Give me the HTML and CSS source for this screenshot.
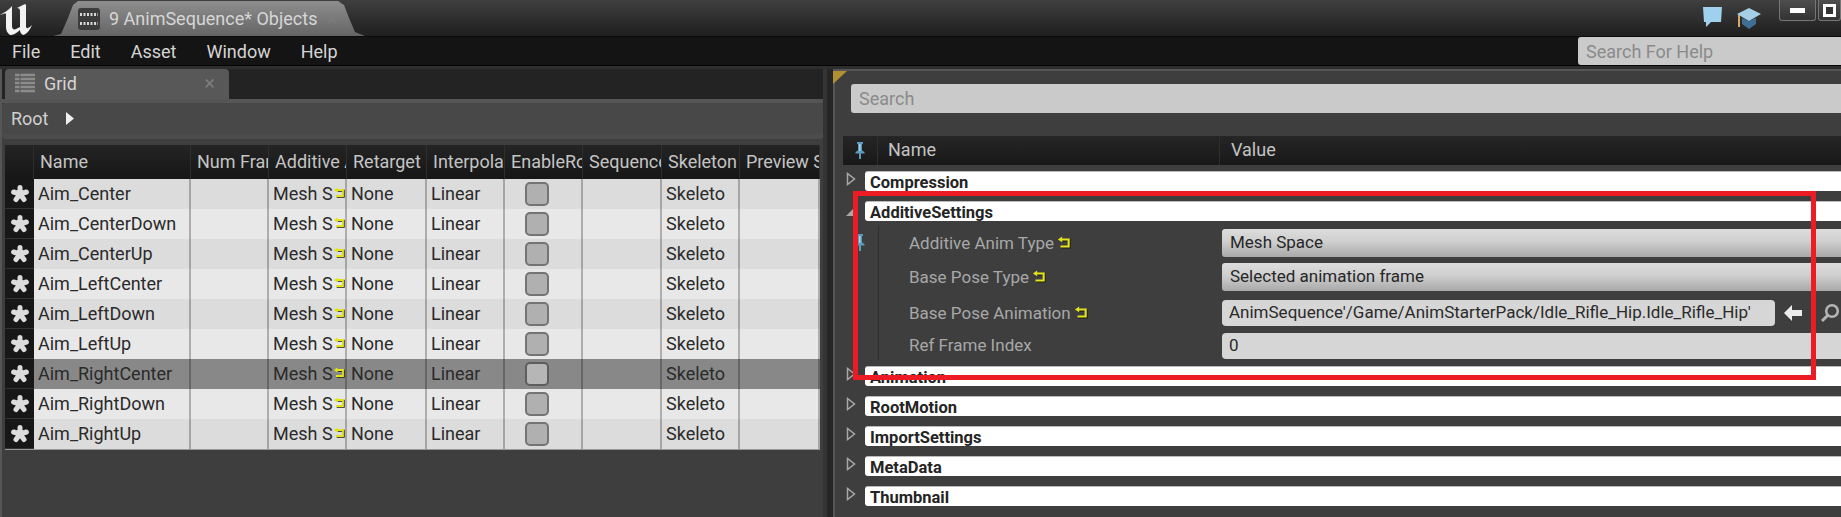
FILE: index.html
```html
<!DOCTYPE html>
<html lang="en">
<head>
    <meta charset="UTF-8">
    <title>9 AnimSequence Objects</title>
    <link rel="stylesheet" href="styles.css">
</head>
<body>
    <svg class="icon-defs" width="0" height="0">
        <symbol id="star" viewBox="0 0 20 20">
            <path d="M10 10V3.500M10 10L3.600 8M10 10l6.400-2M10 10l-4 5.500M10 10l4 5.500" stroke="#dcdcdc" stroke-width="5" stroke-linecap="round"/>
        </symbol>
        <symbol id="reset" viewBox="0 0 12 12">
            <path d="M4 3h6v6H3" fill="none" stroke="#1c1c10" stroke-width="2" transform="translate(.7 .7)"/>
            <path d="M4 3h6v6H3" fill="none" stroke="#e4e41c" stroke-width="1.800"/>
            <path d="M4.400 .4v5L.8 3z" fill="#e4e41c"/>
        </symbol>
        <symbol id="pin" viewBox="0 0 12 18">
            <path d="M3 1h6v1.500l-1 .8v6l2.500 2v1.200H7v5.500H5v-5.500H1.500v-1.200l2.500-2v-6l-1-.8z" fill="#5b9bbd"/>
            <path d="M5 3h1.500v7H5z" fill="#a9d3e8"/>
        </symbol>
        <symbol id="closed" viewBox="0 0 10 14">
            <path d="M1.500 1.500v11L8.500 7z" fill="none" stroke="#a8a8a8" stroke-width="1.500"/>
        </symbol>
    </svg>

    <div class="app">
        <header class="titlebar">
            <svg class="ue-logo" viewBox="0 0 32 34">
                <path d="M0 13C3 11 8 9 12 4V24C12 27 14 28 16 27L20 25V9C20 7 19 6 17 6L25 2 26 3V24C26 27 28 27 32 23 30 28 27 32 23 33 21 32 20 30 20 28 17 31 13 33 10 33 7 31 6 28 6 25V12C6 11 3 12 0 13Z" fill="#f2f2f2"/>
            </svg>
            <div class="doc-tab">
                <svg class="doc-tab-icon" viewBox="0 0 24 24">
                    <rect x="1" y="1" width="22" height="22" rx="3" fill="#3c3c3c"/>
                    <path d="M3 7.500h18M3 16.500h18" stroke="#d8d8d8" stroke-width="3" stroke-dasharray="2 1.500"/>
                </svg>
                <span class="doc-tab-label">9 AnimSequence* Objects</span>
                <span class="close-x">&times;</span>
            </div>
            <div class="title-right">
                <svg class="chat-icon" viewBox="0 0 22 22">
                    <path d="M2 1h19l-1 15H10l-5 5v-5H3z" fill="#9fd0ee"/>
                </svg>
                <svg class="hat-icon" viewBox="0 0 24 24">
                    <path d="M5 12l7 3 7-3v6l-7 5-7-5z" fill="#3f6f94"/>
                    <path d="M0 8l12-6 12 6-12 7z" fill="#a4cfe6"/>
                    <rect x="1" y="9" width="2" height="12" fill="#d9a860"/>
                </svg>
                <div class="win-btn win-min"><span class="min-bar"></span></div>
                <div class="win-btn win-max"><span class="max-box"></span></div>
            </div>
        </header>

        <nav class="menubar">
            <ul class="menu">
                <li>File</li>
                <li>Edit</li>
                <li>Asset</li>
                <li>Window</li>
                <li>Help</li>
            </ul>
            <div class="help-search">Search For Help</div>
        </nav>

        <main class="workspace">
            <section class="grid-panel">
                <div class="panel-tabs">
                    <div class="grid-tab">
                        <svg class="grid-tab-icon" viewBox="0 0 20 20">
                            <path d="M0 2h20M0 6h20M0 10h20M0 14h20M0 18h20" stroke="#8c8c8c" stroke-width="2.500"/>
                            <path d="M5 0v20" stroke="#5a5a5a" stroke-width="1"/>
                        </svg>
                        <span class="grid-tab-label">Grid</span>
                        <span class="close-x">&times;</span>
                    </div>
                </div>
                <div class="breadcrumb">
                    <span>Root</span>
                    <svg class="crumb-arrow" viewBox="0 0 8 13"><path d="M0 0v13l8-6.500z" fill="#f0f0f0"/></svg>
                </div>

                <div class="grid-table">
                    <div class="grid-row grid-head">
                        <div></div>
                        <div>Name</div>
                        <div>Num Frames</div>
                        <div>Additive Anim</div>
                        <div>Retarget</div>
                        <div>Interpolation</div>
                        <div>EnableRoot</div>
                        <div>Sequence</div>
                        <div>Skeleton</div>
                        <div>Preview Skeleton</div>
                    </div>

                    <div class="grid-row row-a">
                        <div class="star-cell"><svg class="star"><use href="#star"/></svg></div>
                        <div class="cell">Aim_Center</div><div class="cell"></div>
                        <div class="cell additive"><span>Mesh Space</span><svg class="reset"><use href="#reset"/></svg></div>
                        <div class="cell">None</div><div class="cell">Linear</div>
                        <div class="cell check-cell"><span class="check"></span></div>
                        <div class="cell"></div><div class="cell"><span class="skel">Skeleton</span></div><div class="cell"></div>
                    </div>
                    <div class="grid-row row-b">
                        <div class="star-cell"><svg class="star"><use href="#star"/></svg></div>
                        <div class="cell">Aim_CenterDown</div><div class="cell"></div>
                        <div class="cell additive"><span>Mesh Space</span><svg class="reset"><use href="#reset"/></svg></div>
                        <div class="cell">None</div><div class="cell">Linear</div>
                        <div class="cell check-cell"><span class="check"></span></div>
                        <div class="cell"></div><div class="cell"><span class="skel">Skeleton</span></div><div class="cell"></div>
                    </div>
                    <div class="grid-row row-a">
                        <div class="star-cell"><svg class="star"><use href="#star"/></svg></div>
                        <div class="cell">Aim_CenterUp</div><div class="cell"></div>
                        <div class="cell additive"><span>Mesh Space</span><svg class="reset"><use href="#reset"/></svg></div>
                        <div class="cell">None</div><div class="cell">Linear</div>
                        <div class="cell check-cell"><span class="check"></span></div>
                        <div class="cell"></div><div class="cell"><span class="skel">Skeleton</span></div><div class="cell"></div>
                    </div>
                    <div class="grid-row row-b">
                        <div class="star-cell"><svg class="star"><use href="#star"/></svg></div>
                        <div class="cell">Aim_LeftCenter</div><div class="cell"></div>
                        <div class="cell additive"><span>Mesh Space</span><svg class="reset"><use href="#reset"/></svg></div>
                        <div class="cell">None</div><div class="cell">Linear</div>
                        <div class="cell check-cell"><span class="check"></span></div>
                        <div class="cell"></div><div class="cell"><span class="skel">Skeleton</span></div><div class="cell"></div>
                    </div>
                    <div class="grid-row row-a">
                        <div class="star-cell"><svg class="star"><use href="#star"/></svg></div>
                        <div class="cell">Aim_LeftDown</div><div class="cell"></div>
                        <div class="cell additive"><span>Mesh Space</span><svg class="reset"><use href="#reset"/></svg></div>
                        <div class="cell">None</div><div class="cell">Linear</div>
                        <div class="cell check-cell"><span class="check"></span></div>
                        <div class="cell"></div><div class="cell"><span class="skel">Skeleton</span></div><div class="cell"></div>
                    </div>
                    <div class="grid-row row-b">
                        <div class="star-cell"><svg class="star"><use href="#star"/></svg></div>
                        <div class="cell">Aim_LeftUp</div><div class="cell"></div>
                        <div class="cell additive"><span>Mesh Space</span><svg class="reset"><use href="#reset"/></svg></div>
                        <div class="cell">None</div><div class="cell">Linear</div>
                        <div class="cell check-cell"><span class="check"></span></div>
                        <div class="cell"></div><div class="cell"><span class="skel">Skeleton</span></div><div class="cell"></div>
                    </div>
                    <div class="grid-row row-selected">
                        <div class="star-cell"><svg class="star"><use href="#star"/></svg></div>
                        <div class="cell">Aim_RightCenter</div><div class="cell"></div>
                        <div class="cell additive"><span>Mesh Space</span><svg class="reset"><use href="#reset"/></svg></div>
                        <div class="cell">None</div><div class="cell">Linear</div>
                        <div class="cell check-cell"><span class="check"></span></div>
                        <div class="cell"></div><div class="cell"><span class="skel">Skeleton</span></div><div class="cell"></div>
                    </div>
                    <div class="grid-row row-b">
                        <div class="star-cell"><svg class="star"><use href="#star"/></svg></div>
                        <div class="cell">Aim_RightDown</div><div class="cell"></div>
                        <div class="cell additive"><span>Mesh Space</span><svg class="reset"><use href="#reset"/></svg></div>
                        <div class="cell">None</div><div class="cell">Linear</div>
                        <div class="cell check-cell"><span class="check"></span></div>
                        <div class="cell"></div><div class="cell"><span class="skel">Skeleton</span></div><div class="cell"></div>
                    </div>
                    <div class="grid-row row-a">
                        <div class="star-cell"><svg class="star"><use href="#star"/></svg></div>
                        <div class="cell">Aim_RightUp</div><div class="cell"></div>
                        <div class="cell additive"><span>Mesh Space</span><svg class="reset"><use href="#reset"/></svg></div>
                        <div class="cell">None</div><div class="cell">Linear</div>
                        <div class="cell check-cell"><span class="check"></span></div>
                        <div class="cell"></div><div class="cell"><span class="skel">Skeleton</span></div><div class="cell"></div>
                    </div>
                </div>
            </section>

            <div class="splitter"></div>

            <section class="details-panel">
                <div class="details-search">Search</div>

                <div class="details-head">
                    <div class="details-pin"><svg class="pin"><use href="#pin"/></svg></div>
                    <div class="details-name">Name</div>
                    <div class="details-value">Value</div>
                </div>

                <div class="category">
                    <svg class="expander"><use href="#closed"/></svg>
                    <div class="category-bar">Compression</div>
                </div>
                <div class="category">
                    <svg class="expander-open" viewBox="0 0 10 10"><path d="M0 10h10V0z" fill="#a8a8a8"/></svg>
                    <div class="category-bar">AdditiveSettings</div>
                </div>

                <div class="props">
                    <div class="prop prop-first">
                        <div class="prop-pin"><svg class="pin"><use href="#pin"/></svg></div>
                        <div class="prop-name">Additive Anim Type<svg class="reset-big"><use href="#reset"/></svg></div>
                        <div class="combo">Mesh Space</div>
                    </div>
                    <div class="prop">
                        <div class="prop-pin"></div>
                        <div class="prop-name">Base Pose Type<svg class="reset-big"><use href="#reset"/></svg></div>
                        <div class="combo">Selected animation frame</div>
                    </div>
                    <div class="prop prop-asset">
                        <div class="prop-pin"></div>
                        <div class="prop-name">Base Pose Animation<svg class="reset-big"><use href="#reset"/></svg></div>
                        <div class="asset-value">
                            <div class="field asset-field">AnimSequence'/Game/AnimStarterPack/Idle_Rifle_Hip.Idle_Rifle_Hip'</div>
                            <svg class="asset-arrow" viewBox="0 0 20 18"><path d="M9 1v5h10v6H9v5L1 9z" fill="#ececec"/></svg>
                            <svg class="asset-find" viewBox="0 0 20 20">
                                <circle cx="12" cy="8" r="5.800" fill="none" stroke="#b4b4b4" stroke-width="2.600"/>
                                <path d="M7.500 12.500L2 18" stroke="#b4b4b4" stroke-width="3"/>
                            </svg>
                        </div>
                    </div>
                    <div class="prop prop-last">
                        <div class="prop-pin"></div>
                        <div class="prop-name">Ref Frame Index</div>
                        <div class="field">0</div>
                    </div>
                </div>

                <div class="category">
                    <svg class="expander"><use href="#closed"/></svg>
                    <div class="category-bar">Animation</div>
                </div>
                <div class="category">
                    <svg class="expander"><use href="#closed"/></svg>
                    <div class="category-bar">RootMotion</div>
                </div>
                <div class="category">
                    <svg class="expander"><use href="#closed"/></svg>
                    <div class="category-bar">ImportSettings</div>
                </div>
                <div class="category">
                    <svg class="expander"><use href="#closed"/></svg>
                    <div class="category-bar">MetaData</div>
                </div>
                <div class="category">
                    <svg class="expander"><use href="#closed"/></svg>
                    <div class="category-bar">Thumbnail</div>
                </div>

                <div class="highlight-box"></div>
            </section>
        </main>
    </div>
</body>
</html>
```

FILE: styles.css
```css
html, body {
    margin: 0;
    padding: 0;
    height: 100%;
    overflow: hidden;
    background-color: #3e3e3e;
}

body {
    font-family: Roboto, "Liberation Sans", sans-serif;
    font-size: 18px;
    color: #d8d8d8;
}

.icon-defs {
    position: absolute;
}

.app {
    display: flex;
    flex-direction: column;
    height: 517px;
}

/* title bar */
.titlebar {
    display: flex;
    align-items: flex-end;
    height: 36px;
    background: linear-gradient(#3f3f3f, #1f1f1f);
    border-bottom: 1px solid #0a0a0a;
}

.ue-logo {
    width: 32px;
    height: 34px;
    flex: none;
}

.doc-tab {
    display: flex;
    align-items: center;
    width: 312px;
    height: 35px;
    margin-left: 21px;
    padding-left: 24px;
    box-sizing: border-box;
    background: linear-gradient(#8e8e8e, #646464);
    clip-path: polygon(0 100%, 8px 33px, 15px 17px, 20px 4px, 25px 0, 285px 0, 291px 4px, 296px 17px, 302px 31px, 100% 100%);
}

.doc-tab-icon {
    width: 24px;
    height: 24px;
    flex: none;
}

.doc-tab-label {
    margin-left: 8px;
    color: #d6d6d6;
    white-space: nowrap;
}

.close-x {
    color: #7c7c7c;
    font-size: 20px;
}

.doc-tab .close-x {
    margin-left: 9px;
}

.title-right {
    display: flex;
    align-items: flex-start;
    align-self: stretch;
    margin-left: auto;
}

.chat-icon {
    width: 22px;
    height: 22px;
    margin-top: 6px;
}

.hat-icon {
    width: 24px;
    height: 24px;
    margin: 6px 18px 0 14px;
}

.win-btn {
    display: flex;
    align-items: center;
    justify-content: center;
    height: 21px;
    box-sizing: border-box;
    background: linear-gradient(#4e4e4e, #333);
    border: 1px solid #767676;
    border-top: none;
    border-radius: 0 0 3px 3px;
}

.win-min {
    width: 37px;
    margin-right: 2px;
}

.win-max {
    width: 23px;
}

.min-bar {
    width: 15px;
    height: 5px;
    background-color: #fff;
}

.max-box {
    width: 7px;
    height: 7px;
    border: 3px solid #fff;
    background-color: #333;
}

/* menu bar */
.menubar {
    display: flex;
    align-items: stretch;
    height: 28px;
    background-color: #141414;
    border-bottom: 1px solid #050505;
}

.menu {
    display: flex;
    align-items: center;
    gap: 30px;
    margin: 0;
    padding: 0 0 0 12px;
    list-style-type: none;
    color: #d4d4d4;
}

.help-search {
    display: flex;
    align-items: center;
    width: 263px;
    margin-left: auto;
    padding-left: 8px;
    box-sizing: border-box;
    background-color: #cacaca;
    border-radius: 3px 0 0 3px;
    color: #8a8a8a;
}

/* workspace */
.workspace {
    display: flex;
    flex: 1;
    min-height: 0;
    border-top: 3px solid #2e2e2e;
}

.grid-panel {
    width: 823px;
    flex: none;
    box-sizing: border-box;
    border-left: 2px solid #565656;
    background-color: #3e3e3e;
}

.panel-tabs {
    height: 30px;
    padding-left: 3px;
    background-color: #232323;
    border-bottom: 4px solid #555;
}

.grid-tab {
    display: flex;
    align-items: center;
    width: 224px;
    height: 30px;
    padding: 0 0 2px 10px;
    box-sizing: border-box;
    background-color: #585858;
    border-radius: 4px 4px 0 0;
}

.grid-tab-icon {
    width: 20px;
    height: 20px;
    flex: none;
}

.grid-tab-label {
    margin-left: 9px;
    color: #d4d4d4;
}

.grid-tab .close-x {
    margin-left: auto;
    margin-right: 14px;
}

.breadcrumb {
    display: flex;
    align-items: center;
    gap: 17px;
    height: 31px;
    padding-left: 9px;
    margin-bottom: 11px;
    background-color: #484848;
    border-radius: 3px;
    color: #d0d0d0;
    box-shadow: 0 5px 0 #4c4c4c;
}

.crumb-arrow {
    width: 8px;
    height: 13px;
}

.grid-table {
    margin-left: 3px;
    width: 815px;
}

.grid-row {
    display: grid;
    grid-template-columns: 29px 157px 78px 78px 80px 78px 78px 79px 78px 80px;
    height: 30px;
}

.grid-head {
    height: 34px;
    background: linear-gradient(#242424, #161616);
    color: #c4c4c4;
}

.grid-head div {
    display: flex;
    align-items: center;
    padding: 0 0 2px 6px;
    overflow: hidden;
    white-space: nowrap;
    border-right: 1px solid #2e2e2e;
}

.row-a { background-color: #dcdcdc; }
.row-b { background-color: #e8e8e8; }
.row-selected { background-color: #888; }

.star-cell {
    display: flex;
    align-items: center;
    justify-content: center;
    background-color: #171717;
    border-bottom: 1px solid #333;
    box-sizing: border-box;
}

.star {
    width: 20px;
    height: 20px;
}

.cell {
    display: flex;
    align-items: center;
    padding: 0 0 2px 4px;
    overflow: hidden;
    white-space: nowrap;
    color: #2a2a2a;
    border-right: 2px solid rgba(0, 0, 0, 0.25);
    min-width: 0;
}

.grid-row:last-child {
    height: 30px;
    box-shadow: 0 1px 0 #9a9a9a;
}

.additive span {
    width: 60px;
    flex: none;
    overflow: hidden;
}

.reset {
    width: 12px;
    height: 12px;
    flex: none;
}

.check-cell {
    padding: 0 0 0 20px;
}

.check {
    width: 20px;
    height: 20px;
    background-color: #b0b0b0;
    border: 2px solid #747474;
    border-radius: 5px;
}

.row-selected .check {
    background-color: #b6b6b6;
    border-color: #5e5e5e;
}

.skel {
    width: 59px;
    overflow: hidden;
}

/* splitter */
.splitter {
    width: 10px;
    flex: none;
    background: linear-gradient(90deg, #343434 40%, #262626 40%);
}

/* details */
.details-panel {
    position: relative;
    flex: 1;
    min-width: 0;
    background-color: #3e3e3e;
    border-top: 2px solid #565656;
    box-shadow: inset 2px 0 0 #555;
}

.details-panel::before {
    content: "";
    position: absolute;
    left: 0;
    top: 0;
    border-top: 13px solid #b09032;
    border-right: 14px solid transparent;
}

.details-search {
    display: flex;
    align-items: center;
    height: 29px;
    margin: 13px 0 0 18px;
    padding-left: 8px;
    background-color: #cacaca;
    border-radius: 3px 0 0 3px;
    color: #8a8a8a;
}

.details-head {
    display: grid;
    grid-template-columns: 35px 341px 1fr;
    height: 29px;
    margin: 23px 0 6px 10px;
    background: linear-gradient(#262626, #181818);
    color: #c4c4c4;
}

.details-head div {
    display: flex;
    align-items: center;
    padding-bottom: 2px;
}

.details-pin {
    justify-content: center;
    border-right: 1px solid #2e2e2e;
}

.details-name {
    padding-left: 10px;
}

.details-value {
    padding-left: 11px;
    border-left: 1px solid #2e2e2e;
}

.pin {
    width: 12px;
    height: 18px;
}

.category {
    display: flex;
    align-items: center;
    height: 20px;
    margin-bottom: 10px;
}

.expander {
    width: 10px;
    height: 14px;
    margin: -4px 9px 0 13px;
    flex: none;
}

.expander-open {
    width: 10px;
    height: 10px;
    margin: 0 9px 0 13px;
    flex: none;
}

.category-bar {
    flex: 1;
    height: 20px;
    line-height: 22px;
    padding-left: 5px;
    background-color: #fff;
    border-top: 1px solid #bbb;
    box-sizing: border-box;
    border-radius: 3px 0 0 3px;
    color: #242424;
    font-size: 16.500px;
    font-weight: 700;
    overflow: hidden;
}

.props {
    margin: -5px 0 6px;
}

.prop {
    display: grid;
    grid-template-columns: 45px 344px 1fr;
    height: 34px;
    font-size: 17px;
}

.prop-first {
    height: 37px;
    padding-top: 3px;
    box-sizing: border-box;
}

.prop-asset {
    height: 36px;
    padding-top: 3px;
    box-sizing: border-box;
}

.prop-last {
    height: 27px;
}

.prop-pin {
    display: flex;
    justify-content: flex-end;
    padding: 4px 12px 0 0;
}

.prop-name {
    display: flex;
    align-items: flex-start;
    gap: 3px;
    padding: 3px 0 0 30px;
    margin-top: -3px;
    box-sizing: content-box;
    border-left: 1px solid #2f2f2f;
    color: #a8a8a8;
    line-height: 28px;
}

.prop-asset .prop-name {
    padding-top: 2px;
}

.prop-last .prop-name {
    padding-top: 1px;
}

.reset-big {
    width: 14px;
    height: 14px;
    margin-top: 7px;
    flex: none;
}

.combo {
    display: flex;
    align-items: center;
    height: 28px;
    padding: 0 0 2px 8px;
    background: linear-gradient(#dcdcdc, #cfcfcf 45%, #a8a8a8);
    border-radius: 3px 0 0 3px;
    color: #262626;
    box-sizing: border-box;
}

.field {
    display: flex;
    align-items: center;
    height: 26px;
    padding: 0 0 2px 7px;
    background-color: #d6d6d6;
    border-radius: 4px 0 0 4px;
    color: #2a2a2a;
    box-sizing: border-box;
}

.asset-value {
    display: flex;
    align-items: flex-start;
}

.asset-field {
    width: 553px;
    border-radius: 4px;
    flex: none;
    overflow: hidden;
    white-space: nowrap;
}

.asset-arrow {
    width: 20px;
    height: 18px;
    margin: 4px 0 0 8px;
    flex: none;
}

.asset-find {
    width: 20px;
    height: 20px;
    margin: 3px 0 0 17px;
    flex: none;
}

.highlight-box {
    position: absolute;
    left: 20px;
    top: 120px;
    width: 963px;
    height: 189px;
    box-sizing: border-box;
    border: 5px solid #ed1c24;
}
```
